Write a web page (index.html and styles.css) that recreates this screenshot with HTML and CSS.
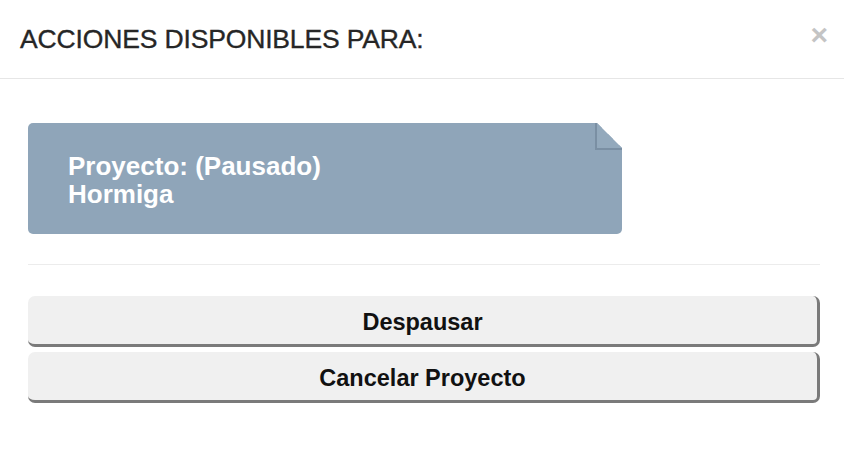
FILE: index.html
```html
<!DOCTYPE html>
<html lang="es">
<head>
<meta charset="utf-8">
<title>Acciones disponibles</title>
<link rel="stylesheet" href="styles.css">
</head>
<body>
<div class="modal">
  <header class="modal-header">
    <h1 class="modal-title">ACCIONES DISPONIBLES PARA:</h1>
    <button class="close" type="button" aria-label="Cerrar">×</button>
  </header>
  <section class="modal-body">
    <div class="note">
      <div class="note-text">Proyecto: (Pausado)<br>Hormiga</div>
    </div>
    <hr class="divider">
    <div class="actions">
      <button class="action" type="button">Despausar</button>
      <button class="action" type="button">Cancelar Proyecto</button>
    </div>
  </section>
</div>
</body>
</html>
```
FILE: styles.css
```css
* { box-sizing: border-box; }
html, body {
  margin: 0;
  padding: 0;
  background: #ffffff;
  font-family: "Liberation Sans", Arial, Helvetica, sans-serif;
}
.modal {
  width: 844px;
  height: 453px;
  background: #fff;
}
.modal-header {
  height: 79px;
  border-bottom: 1px solid #e6e6e6;
  display: flex;
  align-items: flex-start;
  justify-content: space-between;
  padding: 23px 16px 0 20px;
}
.modal-title {
  margin: 0;
  font-size: 26.5px;
  line-height: 32px;
  font-weight: normal;
  color: #262626;
  letter-spacing: -0.15px;
  -webkit-text-stroke: 0.35px #262626;
}
.close {
  border: 0;
  background: none;
  padding: 0;
  margin-top: -4px;
  font-family: "Liberation Sans", Arial, sans-serif;
  font-size: 30px;
  line-height: 32px;
  font-weight: bold;
  color: #c4c4c4;
  cursor: pointer;
}
.modal-body {
  padding: 44px 24px 0 28px;
}
.note {
  position: relative;
  width: 594px;
  height: 111px;
  background: #8fa5b9;
  border-radius: 5px;
  clip-path: polygon(0 0, calc(100% - 25px) 0, 100% 25px, 100% 100%, 0 100%);
  padding: 29px 0 0 40px;
}
.note::after {
  content: "";
  position: absolute;
  top: 0;
  right: 0;
  width: 25px;
  height: 25px;
  background: linear-gradient(to bottom left, transparent 50%, #93a9bc 50%);
  border-left: 2px solid #7a8fa3;
  border-bottom: 2px solid #7a8fa3;
}
.note-text {
  color: #ffffff;
  font-weight: bold;
  font-size: 26px;
  line-height: 28px;
}
.divider {
  margin: 30px 0 0 0;
  border: 0;
  border-top: 1px solid #ececec;
  height: 0;
}
.actions {
  margin-top: 31px;
  display: flex;
  flex-direction: column;
  gap: 5px;
}
.action {
  height: 51px;
  width: 100%;
  background: #f0f0f0;
  border: 0;
  border-right: 3px solid #7a7a7a;
  border-bottom: 3px solid #7a7a7a;
  border-radius: 7px;
  font-family: "Liberation Sans", Arial, sans-serif;
  font-weight: bold;
  font-size: 23.5px;
  color: #111;
  padding: 4px 0 0 0;
  cursor: pointer;
}
```
